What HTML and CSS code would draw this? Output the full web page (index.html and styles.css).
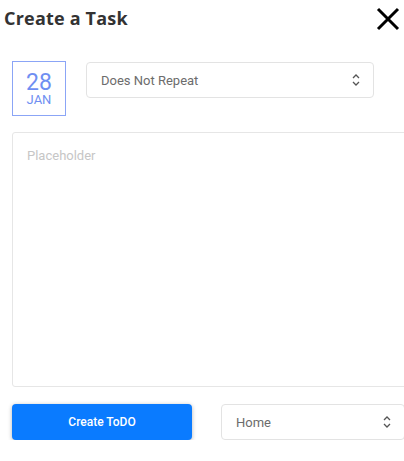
FILE: index.html
```html
<!DOCTYPE html>
<html>
<head>
<meta charset="utf-8">
<link rel="stylesheet" href="styles.css">
</head>
<body>
<div class="page">
  <header class="head">
    <h1 class="title">Create a Task</h1>
    <button class="close" aria-label="Close">
      <svg width="24" height="24" viewBox="0 0 24 24"><path d="M2 2L22 22M22 2L2 22" stroke="#000" stroke-width="3" fill="none"/></svg>
    </button>
  </header>
  <div class="row1">
    <div class="date">
      <span class="day">28</span>
      <span class="mon">JAN</span>
    </div>
    <div class="select repeat">
      <span>Does Not Repeat</span>
      <svg class="caret" width="8" height="14" viewBox="0 0 8 14"><path d="M1 5L4 2L7 5M1 9L4 12L7 9" stroke="#555" stroke-width="1.3" fill="none"/></svg>
    </div>
  </div>
  <div class="textarea"><span class="ph">Placeholder</span></div>
  <div class="row2">
    <button class="create">Create ToDO</button>
    <div class="select home">
      <span>Home</span>
      <svg class="caret" width="8" height="14" viewBox="0 0 8 14"><path d="M1 5L4 2L7 5M1 9L4 12L7 9" stroke="#555" stroke-width="1.3" fill="none"/></svg>
    </div>
  </div>
</div>
</body>
</html>
```
FILE: styles.css
```css
html, body { margin: 0; padding: 0; background: #fff; overflow: hidden; }
body { width: 404px; height: 461px; font-family: Roboto, "Liberation Sans", Arial, sans-serif; }
.page { width: 404px; overflow: hidden; }
.head { display: flex; align-items: center; justify-content: space-between; width: 396px; padding: 4px 0 0 4px; height: 28px; }
.title { margin: 0; font-family: "Open Sans", sans-serif; font-weight: 700; font-size: 18px; color: #333; letter-spacing: 0.2px; }
.close { border: 0; background: none; padding: 0; width: 24px; height: 24px; margin-top: 2px; }
.close svg { display: block; }
.row1 { display: flex; align-items: flex-start; gap: 20px; margin: 29px 0 0 12px; }
.date { box-sizing: border-box; width: 54px; height: 55px; border: 1px solid #8ba5f6; display: flex; flex-direction: column; align-items: center; justify-content: center; color: #6f8ff2; }
.day { font-size: 23px; line-height: 22px; }
.mon { font-size: 13px; line-height: 12px; }
.select { box-sizing: border-box; height: 36px; border: 1px solid #e3e3e3; border-radius: 4px; display: flex; align-items: center; justify-content: space-between; padding: 0 13px 0 14px; font-size: 13px; color: #6c6c6c; flex-shrink: 0; }
.repeat { width: 288px; margin-top: 1px; }
.caret { display: block; }
.textarea { box-sizing: border-box; margin: 16px 0 0 12px; width: 420px; height: 255px; border: 1px solid #e6e6e6; border-radius: 3px; padding: 12px 14px; }
.ph { font-size: 13px; color: #c6c6c6; }
.row2 { display: flex; align-items: center; gap: 29px; margin: 17px 0 0 12px; }
.create { flex-shrink: 0; width: 180px; height: 36px; border: 0; border-radius: 4px; background: #0a7bff; color: #fff; font-family: Roboto, "Liberation Sans", sans-serif; font-size: 12px; font-weight: 500; box-shadow: 0 1px 4px rgba(0,0,0,0.3); }
.home { width: 184px; }
```
